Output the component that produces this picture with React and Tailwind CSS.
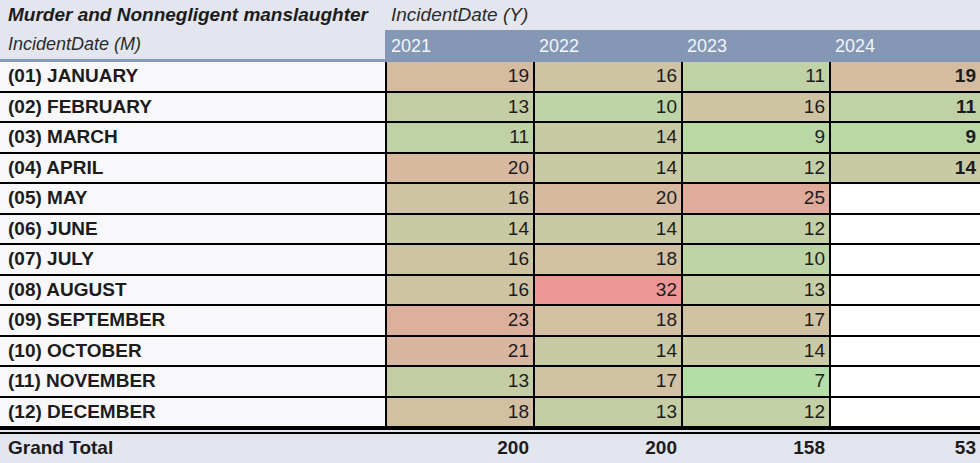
import React from "react";

const months = [
  "(01) JANUARY",
  "(02) FEBRUARY",
  "(03) MARCH",
  "(04) APRIL",
  "(05) MAY",
  "(06) JUNE",
  "(07) JULY",
  "(08) AUGUST",
  "(09) SEPTEMBER",
  "(10) OCTOBER",
  "(11) NOVEMBER",
  "(12) DECEMBER",
];

const data = [
  [19, 16, 11, 19],
  [13, 10, 16, 11],
  [11, 14, 9, 9],
  [20, 14, 12, 14],
  [16, 20, 25, null],
  [14, 14, 12, null],
  [16, 18, 10, null],
  [16, 32, 13, null],
  [23, 18, 17, null],
  [21, 14, 14, null],
  [13, 17, 7, null],
  [18, 13, 12, null],
];

const years = ["2021", "2022", "2023", "2024"];
const totals = [200, 200, 158, 53];

// green -> tan -> red colour scale
const lo = [181, 221, 167];
const mid = [211, 191, 162];
const hi = [239, 150, 150];

const mix = (a, b, t) => a.map((v, i) => Math.round(v + (b[i] - v) * t));

const cellColor = (v) => {
  if (v == null) return "#ffffff";
  let c;
  if (v <= 18) c = mix(lo, mid, Math.max(0, (v - 7) / 11));
  else c = mix(mid, hi, Math.min(1, (v - 18) / 14));
  return `rgb(${c[0]}, ${c[1]}, ${c[2]})`;
};

const App = () => {
  return (
    <div className="w-[980px] h-[463px] overflow-hidden bg-white font-['Liberation_Sans',Arial,sans-serif] text-[#1c1c1c]">
      <div className="flex h-[30px] items-center bg-[#e3e6ee]">
        <div className="w-[385px] pl-2 text-[19px] font-bold italic">
          Murder and Nonnegligent manslaughter
        </div>
        <div className="pl-[6px] text-[19px] italic text-[#2b2b2b]">
          IncidentDate (Y)
        </div>
      </div>

      <div className="flex h-[32px]">
        <div className="flex w-[385px] items-center border-b-[3px] border-[#8a9bb8] bg-[#e3e6ee] pl-2 text-[18px] italic text-[#2b2b2b]">
          IncidentDate (M)
        </div>
        <div className="flex flex-1 bg-[#8497b5] text-[18px] text-[#f2f4f9]">
          {years.map((y) => (
            <div key={y} className="flex w-[148px] items-center pl-[6px] last:flex-1">
              {y}
            </div>
          ))}
        </div>
      </div>

      {months.map((m, r) => (
        <div
          key={m}
          className="grid h-[30.5px] grid-cols-[385px_148px_148px_148px_1fr] border-b-2 border-black text-[19px]"
        >
          <div className="flex items-center bg-[#f8f8fa] pl-2 font-bold">{m}</div>
          {data[r].map((v, c) => (
            <div
              key={c}
              className={`flex items-center justify-end border-l-2 border-black pr-1 ${c === 3 ? "font-bold" : ""}`}
              style={{ backgroundColor: cellColor(v) }}
            >
              {v}
            </div>
          ))}
        </div>
      ))}

      <div className="grid h-[35px] grid-cols-[385px_148px_148px_148px_1fr] border-t-[6px] border-double border-black bg-[#e3e6ee] pb-[2px] text-[19px] font-bold">
        <div className="flex items-center pl-2">Grand Total</div>
        {totals.map((t, i) => (
          <div key={i} className="flex items-center justify-end pr-1">
            {t}
          </div>
        ))}
      </div>
    </div>
  );
};

export default App;
